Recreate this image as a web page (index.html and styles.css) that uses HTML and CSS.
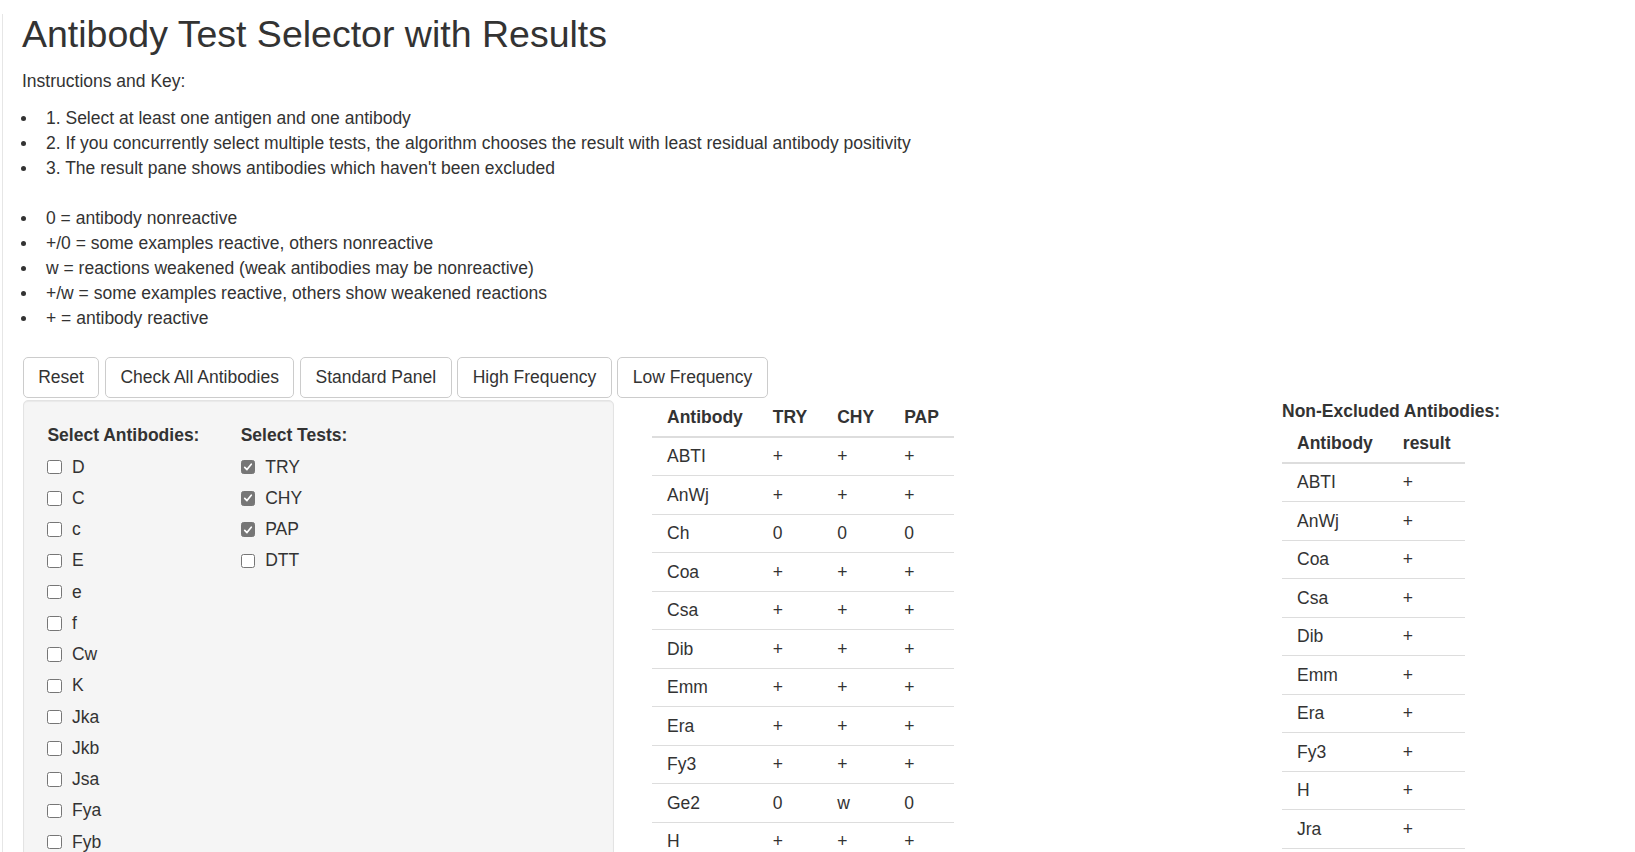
FILE: index.html
```html
<!DOCTYPE html>
<html lang="en">
<head>
<meta charset="utf-8">
<title>Antibody Test Selector with Results</title>
<link rel="stylesheet" href="styles.css">
</head>
<body>
<div class="frame">
  <div class="container">
    <h2 class="title">Antibody Test Selector with Results</h2>
    <p class="intro">Instructions and Key:</p>
    <ul class="list list-steps">
      <li>1. Select at least one antigen and one antibody</li>
      <li>2. If you concurrently select multiple tests, the algorithm chooses the result with least residual antibody positivity</li>
      <li>3. The result pane shows antibodies which haven't been excluded</li>
    </ul>
    <ul class="list list-key">
      <li>0 = antibody nonreactive</li>
      <li>+/0 = some examples reactive, others nonreactive</li>
      <li>w = reactions weakened (weak antibodies may be nonreactive)</li>
      <li>+/w = some examples reactive, others show weakened reactions</li>
      <li>+ = antibody reactive</li>
    </ul>

    <div class="toolbar">
      <button class="btn" type="button">Reset</button>
      <button class="btn" type="button">Check All Antibodies</button>
      <button class="btn" type="button">Standard Panel</button>
      <button class="btn" type="button">High Frequency</button>
      <button class="btn" type="button">Low Frequency</button>
    </div>

    <div class="layout">
      <div class="well">
        <div class="well-grid">
          <div class="group">
            <div class="group-label">Select Antibodies:</div>
            <label class="cb-row"><span class="cb"></span><span>D</span></label>
            <label class="cb-row"><span class="cb"></span><span>C</span></label>
            <label class="cb-row"><span class="cb"></span><span>c</span></label>
            <label class="cb-row"><span class="cb"></span><span>E</span></label>
            <label class="cb-row"><span class="cb"></span><span>e</span></label>
            <label class="cb-row"><span class="cb"></span><span>f</span></label>
            <label class="cb-row"><span class="cb"></span><span>Cw</span></label>
            <label class="cb-row"><span class="cb"></span><span>K</span></label>
            <label class="cb-row"><span class="cb"></span><span>Jka</span></label>
            <label class="cb-row"><span class="cb"></span><span>Jkb</span></label>
            <label class="cb-row"><span class="cb"></span><span>Jsa</span></label>
            <label class="cb-row"><span class="cb"></span><span>Fya</span></label>
            <label class="cb-row"><span class="cb"></span><span>Fyb</span></label>
            <label class="cb-row"><span class="cb"></span><span>k</span></label>
            <label class="cb-row"><span class="cb"></span><span>M</span></label>
            <label class="cb-row"><span class="cb"></span><span>N</span></label>
          </div>
          <div class="group">
            <div class="group-label">Select Tests:</div>
            <label class="cb-row"><span class="cb checked"><svg viewBox="0 0 14 14" width="14" height="14"><path d="M3.2 7.4 L5.8 10 L10.8 3.8" fill="none" stroke="#fff" stroke-width="2" stroke-linecap="round" stroke-linejoin="round"/></svg></span><span>TRY</span></label>
            <label class="cb-row"><span class="cb checked"><svg viewBox="0 0 14 14" width="14" height="14"><path d="M3.2 7.4 L5.8 10 L10.8 3.8" fill="none" stroke="#fff" stroke-width="2" stroke-linecap="round" stroke-linejoin="round"/></svg></span><span>CHY</span></label>
            <label class="cb-row"><span class="cb checked"><svg viewBox="0 0 14 14" width="14" height="14"><path d="M3.2 7.4 L5.8 10 L10.8 3.8" fill="none" stroke="#fff" stroke-width="2" stroke-linecap="round" stroke-linejoin="round"/></svg></span><span>PAP</span></label>
            <label class="cb-row"><span class="cb"></span><span>DTT</span></label>
          </div>
        </div>
      </div>

      <div class="main">
        <table class="tbl">
          <thead>
            <tr><th>Antibody</th><th>TRY</th><th>CHY</th><th>PAP</th></tr>
          </thead>
          <tbody>
            <tr><td>ABTI</td><td>+</td><td>+</td><td>+</td></tr>
            <tr><td>AnWj</td><td>+</td><td>+</td><td>+</td></tr>
            <tr><td>Ch</td><td>0</td><td>0</td><td>0</td></tr>
            <tr><td>Coa</td><td>+</td><td>+</td><td>+</td></tr>
            <tr><td>Csa</td><td>+</td><td>+</td><td>+</td></tr>
            <tr><td>Dib</td><td>+</td><td>+</td><td>+</td></tr>
            <tr><td>Emm</td><td>+</td><td>+</td><td>+</td></tr>
            <tr><td>Era</td><td>+</td><td>+</td><td>+</td></tr>
            <tr><td>Fy3</td><td>+</td><td>+</td><td>+</td></tr>
            <tr><td>Ge2</td><td>0</td><td>w</td><td>0</td></tr>
            <tr><td>H</td><td>+</td><td>+</td><td>+</td></tr>
            <tr><td>Jra</td><td>+</td><td>+</td><td>+</td></tr>
          </tbody>
        </table>
      </div>

      <div class="results">
        <div class="results-label">Non-Excluded Antibodies:</div>
        <table class="tbl">
          <thead>
            <tr><th>Antibody</th><th>result</th></tr>
          </thead>
          <tbody>
            <tr><td>ABTI</td><td>+</td></tr>
            <tr><td>AnWj</td><td>+</td></tr>
            <tr><td>Coa</td><td>+</td></tr>
            <tr><td>Csa</td><td>+</td></tr>
            <tr><td>Dib</td><td>+</td></tr>
            <tr><td>Emm</td><td>+</td></tr>
            <tr><td>Era</td><td>+</td></tr>
            <tr><td>Fy3</td><td>+</td></tr>
            <tr><td>H</td><td>+</td></tr>
            <tr><td>Jra</td><td>+</td></tr>
            <tr><td>Lan</td><td>+</td></tr>
          </tbody>
        </table>
      </div>
    </div>
  </div>
</div>
</body>
</html>
```

FILE: styles.css
```css
html {
  scrollbar-width: none;
}
body {
  margin: 0;
  padding-left: 2px;
  font-family: "Liberation Sans", Arial, Helvetica, sans-serif;
  font-size: 17.5px;
  line-height: 25px;
  color: #333333;
  background: #ffffff;
}
.frame {
  border-left: 1px solid #e6e6e6;
  min-height: 100vh;
}
.container {
  padding: 0 19px;
}
.title {
  margin: 14px 0 13.5px;
  font-size: 37.5px;
  line-height: 41.25px;
  font-weight: 500;
}
.intro {
  margin: 0 0 12.5px;
}
.list {
  list-style: none;
  margin: 0;
  padding: 0;
}
.list li::before {
  content: "";
  display: inline-block;
  width: 5px;
  height: 5px;
  border-radius: 50%;
  background: #333333;
  margin-left: -1px;
  margin-right: 20px;
  vertical-align: 3px;
}
.list-steps {
  margin-bottom: 24.25px;
}
.list-key {
  margin-bottom: 26.5px;
}
.toolbar {
  display: flex;
  gap: 5.5px;
  padding-left: 0.7px;
}
.btn {
  font: inherit;
  color: #333333;
  background: #ffffff;
  border: 1px solid #cccccc;
  border-radius: 5px;
  padding: 7.15px 14.5px;
  line-height: 25px;
  white-space: nowrap;
}
.layout {
  display: grid;
  grid-template-columns: 592px 668px 1fr;
  align-items: start;
}
.well {
  margin-top: 1.5px;
  margin-left: 0.7px;
  min-height: 520px;
  background: #f5f5f5;
  border: 1px solid #e3e3e3;
  border-radius: 5px;
  box-shadow: inset 0 1px 1px rgba(0, 0, 0, 0.05);
  padding: 21.75px 23.75px 23.75px;
}
.well-grid {
  display: grid;
  grid-template-columns: 193.25px 1fr;
}
.group-label {
  font-weight: bold;
  margin-bottom: 7px;
}
.cb-row {
  display: flex;
  align-items: center;
  height: 25px;
  margin-bottom: 6.25px;
}
.cb {
  box-sizing: border-box;
  width: 14.5px;
  height: 14.5px;
  border: 1px solid #767676;
  border-radius: 2.5px;
  background: #ffffff;
  margin-right: 10px;
  display: flex;
  align-items: center;
  justify-content: center;
  flex: none;
}
.cb.checked {
  background: #767676;
  border-color: #767676;
}
.cb svg {
  display: block;
  width: 12px;
  height: 12px;
}
.main {
  padding-left: 38px;
}
.tbl {
  border-collapse: collapse;
}
.tbl th,
.tbl td {
  text-align: left;
  padding: 6.25px 15px;
  line-height: 25px;
  vertical-align: top;
}
.tbl th {
  font-weight: bold;
  border-bottom: 2px solid #dddddd;
}
.tbl td {
  border-top: 1px solid #dddddd;
}
.results-label {
  font-weight: bold;
  padding-top: 1px;
}
```
